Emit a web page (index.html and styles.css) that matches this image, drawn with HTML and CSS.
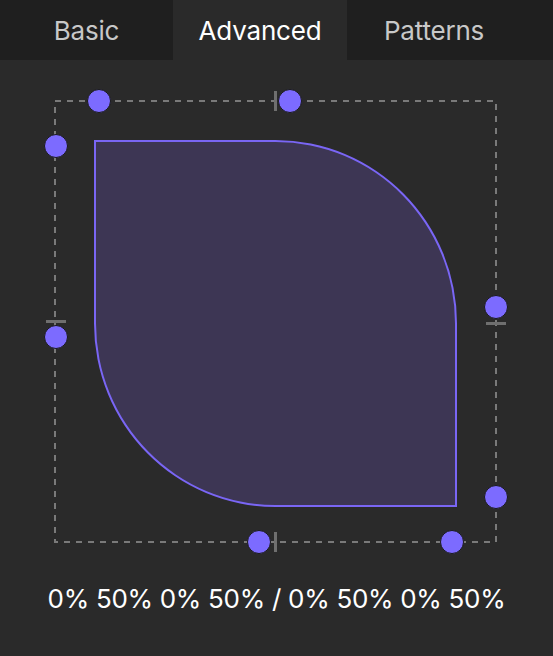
FILE: index.html
```
<!DOCTYPE html>
<html>
<head>
<meta charset="utf-8">
<link rel="stylesheet" href="styles.css">
</head>
<body>
<div class="tabs">
  <div class="tab">Basic</div>
  <div class="tab active">Advanced</div>
  <div class="tab">Patterns</div>
</div>
<div class="stage">
  <div class="frame">
    <svg class="dash" width="443" height="443" viewBox="0 0 443 443">
      <rect x="1" y="1" width="441" height="441" fill="none" stroke="#7a7a7a" stroke-width="2" stroke-dasharray="6 6"/>
    </svg>
    <div class="shape"></div>
    <span class="tick tv" style="left:220px;top:0"></span>
    <span class="tick tv" style="left:220px;top:441px"></span>
    <span class="tick th" style="left:1px;top:220px"></span>
    <span class="tick th" style="left:441px;top:222px"></span>
    <span class="handle" style="left:44px;top:0"></span>
    <span class="handle" style="left:235px;top:0"></span>
    <span class="handle" style="left:1px;top:45px"></span>
    <span class="handle" style="left:1px;top:236px"></span>
    <span class="handle" style="left:441px;top:206px"></span>
    <span class="handle" style="left:441px;top:396px"></span>
    <span class="handle" style="left:204px;top:441px"></span>
    <span class="handle" style="left:397px;top:441px"></span>
  </div>
  <div class="value">0% 50% 0% 50% / 0% 50% 0% 50%</div>
</div>
</body>
</html>
```
FILE: styles.css
```
html, body {
  margin: 0;
  padding: 0;
  background: #2a2a2a;
  font-family: Inter, "Liberation Sans", sans-serif;
}
.tabs {
  display: flex;
  height: 60px;
  background: #1f1f1f;
}
.tab {
  width: 174px;
  display: flex;
  align-items: center;
  justify-content: center;
  font-size: 26px;
  letter-spacing: -0.2px;
  color: #c8c8c8;
}
.tab:first-child {
  width: 173px;
}
.tab.active {
  background: #2a2a2a;
  color: #ffffff;
}
.stage {
  padding-top: 41px;
}
.frame {
  position: relative;
  margin-left: 55px;
  width: 441px;
  height: 441px;
}
.dash {
  position: absolute;
  left: -1px;
  top: -1px;
}
.shape {
  position: absolute;
  left: 39px;
  top: 39px;
  width: 359px;
  height: 363px;
  background: #3d3654;
  border: 2px solid #7a66f5;
  border-radius: 0% 50% 0% 50% / 0% 50% 0% 50%;
}
.tick {
  position: absolute;
  background: #6f6f6f;
}
.tv {
  width: 3px;
  height: 20px;
  margin-left: -1.5px;
  margin-top: -10px;
}
.th {
  width: 20px;
  height: 3px;
  margin-left: -10px;
  margin-top: -1.5px;
}
.handle {
  position: absolute;
  width: 22px;
  height: 22px;
  margin-left: -12.5px;
  margin-top: -12.5px;
  border-radius: 50%;
  background: #7c6bff;
  border: 1.5px solid #1a1a1a;
}
.value {
  margin-top: 41px;
  text-align: center;
  color: #ffffff;
  font-size: 26px;
  letter-spacing: -0.3px;
  line-height: 32px;
}
```
